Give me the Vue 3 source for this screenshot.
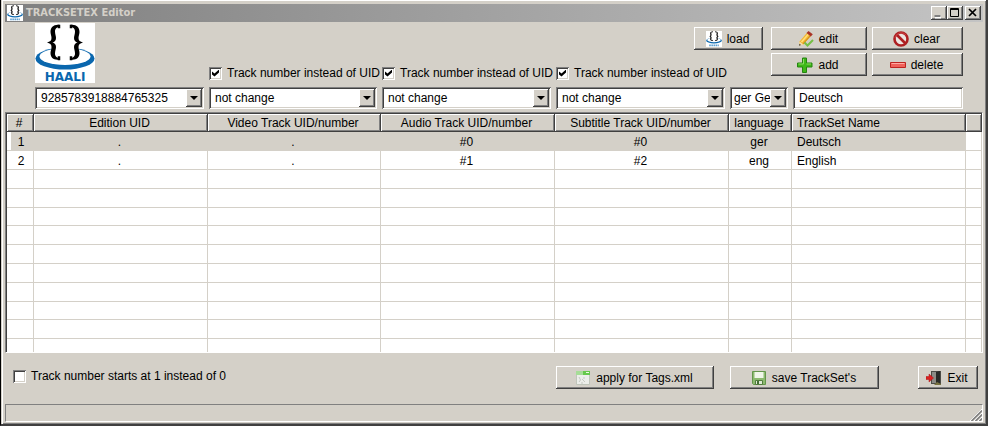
<script setup>
import { ref } from 'vue'

const editionUid = ref('9285783918884765325')
const tracks = ref([
  { id: 'video', label: 'Video track', useNumber: true, value: 'not change' },
  { id: 'audio', label: 'Audio track', useNumber: true, value: 'not change' },
  { id: 'subtitle', label: 'Subtitle track', useNumber: true, value: 'not change' }
])
const language = ref('ger German')
const setName = ref('Deutsch')
const startAtOne = ref(false)
const selected = ref(0)

const headers = [
  '#',
  'Edition UID',
  'Video Track UID/number',
  'Audio Track UID/number',
  'Subtitle Track UID/number',
  'language',
  'TrackSet Name',
  ''
]
const rows = [
  ['1', '.', '.', '#0', '#0', 'ger', 'Deutsch', ''],
  ['2', '.', '.', '#1', '#2', 'eng', 'English', ''],
  ...Array.from({ length: 10 }, () => Array(8).fill(''))
]
</script>

<template>
  <main class="window">
    <svg class="defs" aria-hidden="true">
      <symbol id="haali" viewBox="0 0 60 60">
        <rect width="60" height="60" fill="#fff" />
        <ellipse cx="30" cy="35.500" rx="29.500" ry="11" fill="#0a67ae" />
        <ellipse cx="30" cy="33.500" rx="25.500" ry="8.500" fill="#fff" />
        <path d="M16 14h28v23H16z" fill="#fff" />
        <path
          id="brace"
          d="M25 2C19 1 15.500 4 15.500 9C15.500 11 16.500 13 16.500 15C16.500 17.500 15 18.800 12 19.500C15 20.200 16.500 21.500 16.500 24C16.500 26 15.500 28 15.500 30C15.500 35 19 37.500 25 36.500V35C21.500 35 20 33 20 30.500C20 28 21 26 21 24C21 21.500 19.500 20 17.500 19.500C19.500 19 21 17.500 21 15C21 13 20 11 20 8.500C20 6 21.500 4 25 4Z"
        />
        <use href="#brace" transform="matrix(-1 0 0 1 60 0)" />
        <path d="M23.500 2.500h1v2h-1zM23.500 34h1v2.500h-1zM35.500 2.500h1v2h-1zM35.500 34h1v2.500h-1z" stroke="#000" stroke-width="1.500" />
      </symbol>
    </svg>

    <header class="titlebar">
      <span class="app-icon">
        <svg viewBox="0 0 60 60"><use href="#haali" /><path d="M12 54h36" stroke="#5d9fcf" stroke-width="6" stroke-dasharray="6 2" /></svg>
      </span>
      <h1>TRACKSETEX Editor</h1>
      <div class="caption-buttons">
        <button aria-label="Minimize"><svg viewBox="0 0 16 14"><path d="M4 11h6" stroke="#fff" stroke-width="3" /><path d="M3.500 10h6" stroke="#808080" stroke-width="2" /></svg></button>
        <button aria-label="Maximize"><svg viewBox="0 0 16 14"><path d="M3.500 2.500h8v8h-8zM3 3.500h9" fill="none" stroke="#000" /></svg></button>
        <button class="close" aria-label="Close"><svg viewBox="0 0 16 14"><path d="M4 3l7 7M11 3l-7 7" stroke="#000" stroke-width="1.700" /></svg></button>
      </div>
    </header>

    <section class="editor">
      <div class="logo">
        <svg viewBox="0 0 60 60"><use href="#haali" /></svg>
        <span>HAALI</span>
      </div>

      <div class="actions">
        <button class="push load">
          <svg class="icon" viewBox="0 0 60 60"><use href="#haali" /><path d="M12 54h36" stroke="#5d9fcf" stroke-width="6" stroke-dasharray="6 2" /></svg>
          load
        </button>
        <button class="push">
          <svg class="icon" viewBox="0 0 16 16">
            <path d="M1.500 10.500L9 1.800L13 5L5.500 13.500L1 14.500Z" fill="#f2b632" />
            <path d="M3.500 11L10.500 3" stroke="#ffe07a" stroke-width="1.500" />
            <path d="M5 12.800L12.400 4.800" stroke="#c98212" />
            <path d="M8.500 2L10.500 0L14.800 3.300L12.800 5.500Z" fill="#a93327" />
            <path d="M1.500 10.500L5.500 13.500L1 14.700Z" fill="#f3dcae" />
            <path d="M1 14.700l.5-2 1.500 1.400z" fill="#333" />
            <path d="M6.500 11.500L9.500 14.500L15 9" fill="none" stroke="#75bf45" stroke-width="2" />
          </svg>
          edit
        </button>
        <button class="push">
          <svg class="icon" viewBox="0 0 16 16">
            <circle cx="8" cy="8" r="6.500" fill="#ece5e1" stroke="#ad1f22" stroke-width="2.600" />
            <path d="M3.500 3.500l9 9" stroke="#ad1f22" stroke-width="2.600" />
            <path d="M2 7A6.300 6.300 0 0 1 13 4" fill="none" stroke="#d95555" stroke-width=".7" />
          </svg>
          clear
        </button>
        <button class="push add">
          <svg class="icon" viewBox="0 0 16 16">
            <path d="M5.500 1h4v5H15v4H9.500v5.500h-4V10H.5V6h5z" fill="#3eb817" stroke="#258411" />
            <path d="M6.500 2v5h-5M9.500 7H14" fill="none" stroke="#8bdc63" />
          </svg>
          add
        </button>
        <button class="push">
          <svg class="icon" viewBox="0 0 16 16">
            <path d="M.5 5.500h15v5H.5z" fill="#f0625b" stroke="#bd2420" />
            <path d="M1.500 6.500h13" stroke="#ffaba4" />
          </svg>
          delete
        </button>
      </div>

      <label v-for="t in tracks" :key="t.id" class="check" :class="t.id">
        <input v-model="t.useNumber" type="checkbox" />
        <span>Track number instead of UID</span>
      </label>

      <div class="fields">
        <div class="combo">
          <select v-model="editionUid" aria-label="Edition UID">
            <option>9285783918884765325</option>
          </select>
          <i></i>
        </div>
        <div v-for="t in tracks" :key="t.id" class="combo">
          <select v-model="t.value" :aria-label="t.label">
            <option>not change</option>
          </select>
          <i></i>
        </div>
        <div class="combo">
          <select v-model="language" class="short" aria-label="Language">
            <option value="ger German">ger Ge</option>
          </select>
          <i></i>
        </div>
        <input v-model="setName" class="name" type="text" aria-label="TrackSet name" />
      </div>
    </section>

    <div class="list">
      <table>
        <colgroup>
          <col class="c-index" />
          <col class="c-wide" />
          <col class="c-video" />
          <col class="c-wide" />
          <col class="c-wide" />
          <col class="c-lang" />
          <col class="c-wide" />
          <col />
        </colgroup>
        <thead>
          <tr><th v-for="(h, i) in headers" :key="i" scope="col">{{ h }}</th></tr>
        </thead>
        <tbody>
          <tr v-for="(r, i) in rows" :key="i" :class="{ selected: i === selected }" @click="i < 2 && (selected = i)">
            <td v-for="(c, j) in r" :key="j">{{ c }}</td>
          </tr>
        </tbody>
      </table>
    </div>

    <footer class="bottom">
      <label class="check">
        <input v-model="startAtOne" type="checkbox" />
        <span>Track number starts at 1 instead of 0</span>
      </label>
      <button class="push apply">
        <svg class="icon" viewBox="0 0 16 16">
          <path d="M1.500 1.500h13v13h-13z" fill="#eceeea" stroke="#bfc5ba" />
          <path d="M1 1h14v4H1z" fill="#66c94c" />
          <path d="M1 1h7v4H1z" fill="#a6dd97" />
          <path d="M11 2.500h3" stroke="#e9ffe2" />
          <path d="M4 7l1.500 3L4 12M7 9l3 3M8 8h2M6 13h2" fill="none" stroke="#c4c8c2" />
        </svg>
        apply for Tags.xml
      </button>
      <button class="push save">
        <svg class="icon" viewBox="0 0 16 16">
          <path d="M1.500 1.500h13v13h-12l-1-1z" fill="#8dba70" stroke="#64964b" />
          <path d="M3.500 2h9v6h-9z" fill="#f0f6e9" />
          <path d="M4.500 10.500h7v4h-7z" fill="#dfead7" stroke="#527d3e" />
          <path d="M6 11h2v3H6z" fill="#456d35" />
        </svg>
        save TrackSet's
      </button>
      <button class="push exit">
        <svg class="icon" viewBox="0 0 16 16">
          <path d="M5 1h10v13H5z" fill="#4b4b46" />
          <path d="M6 2h4v11H6z" fill="#8b8b86" />
          <path d="M10 2l4-1v14l-4-2z" fill="#282a28" />
          <path d="M8 15l3-3 4 2v1z" fill="#77713f" />
          <path d="M0 6.500h3V4l4.500 4L3 12V9.500H0z" fill="#d92020" stroke="#a91717" stroke-width=".5" />
        </svg>
        Exit
      </button>
    </footer>

    <div class="status" role="status">
      <svg viewBox="0 0 12 12" aria-hidden="true">
        <path d="M0 12L12 0M4 12l8-8M8 12l4-4" stroke="#fff" />
        <path d="M1.500 12L12 1.500M5.500 12L12 5.500M9.500 12L12 9.500" stroke="#808080" stroke-width="1.600" />
      </svg>
    </div>
  </main>
</template>

<style>
body {
  margin: 0;
  background: #d4d0c8;
}
</style>

<style scoped>
* {
  box-sizing: border-box;
}

.window {
  display: flex;
  flex-direction: column;
  min-height: 100vh;
  padding: 4px 3px 2px 4px;
  border: solid #404040;
  border-width: 0 2px 2px 1px;
  border-left-color: #000;
  background: #d4d0c8;
  box-shadow: inset 1px 0 #d4d0c8, inset 2px 1px #fff, inset -1px -1px #808080;
  color: #000;
  font: 12px/16px "Liberation Sans", Arial, sans-serif;
}

.defs {
  position: absolute;
  width: 0;
  height: 0;
}

button,
input,
select {
  margin: 0;
  border: 0;
  border-radius: 0;
  font: inherit;
  color: inherit;
}

.titlebar {
  display: flex;
  align-items: center;
  height: 18px;
  padding: 0 2px;
  background: linear-gradient(90deg, #808080, #c4c4c4);
}

.app-icon {
  display: flex;
  width: 16px;
  height: 16px;
}

h1 {
  flex: 1;
  margin: 0 0 0 3px;
  color: #d4d0c8;
  font: bold 11px/16px "DejaVu Sans Condensed", Tahoma, sans-serif;
}

.caption-buttons {
  display: flex;
}

.caption-buttons button {
  width: 16px;
  height: 14px;
  padding: 0;
  background: #d4d0c8;
  box-shadow: inset -1px -1px #404040, inset 1px 1px #fff, inset -2px -2px #808080;
}

.caption-buttons svg {
  display: block;
  width: 16px;
  height: 14px;
}

.caption-buttons .close {
  margin-left: 2px;
}

.editor {
  display: grid;
  grid-template-columns: 174px 173px 174px 174px 1fr;
  grid-template-rows: 60px 22px;
  row-gap: 4px;
  padding: 1px 20px 3px 30px;
}

.logo {
  display: grid;
  grid-area: 1 / 1;
  width: 60px;
  height: 60px;
}

.logo > * {
  grid-area: 1 / 1;
}

.logo span {
  align-self: end;
  justify-self: center;
  color: #0a67ae;
  font: bold 12px/12px "DejaVu Sans", Verdana, sans-serif;
}

.actions {
  display: grid;
  grid-area: 1 / 4 / 2 / 6;
  grid-template-columns: 69px 96px 91px;
  grid-auto-rows: 23px;
  justify-content: end;
  gap: 3px 5px;
  padding-top: 4px;
}

.load {
  margin-right: 3px;
  margin-left: -3px;
}

.add {
  grid-column: 2;
}

.push {
  display: flex;
  align-items: center;
  justify-content: center;
  gap: 5px;
  height: 23px;
  padding: 0 2px 0 0;
  background: #d4d0c8;
  box-shadow: inset -1px -1px #404040, inset 1px 1px #fff, inset -2px -2px #808080;
  white-space: nowrap;
}

.icon {
  flex: none;
  width: 16px;
  height: 16px;
}

.check {
  display: flex;
  align-items: center;
  gap: 5px;
  white-space: nowrap;
}

.editor .check {
  z-index: 1;
  align-self: end;
  justify-self: start;
  padding-bottom: 2px;
}

.video {
  grid-area: 1 / 2;
}

.audio {
  grid-area: 1 / 3;
}

.subtitle {
  grid-area: 1 / 4;
}

.check input {
  flex: none;
  appearance: none;
  width: 13px;
  height: 13px;
  padding: 3px;
  background: #fff;
  box-shadow: inset 1px 1px #808080, inset -1px -1px #fff, inset 2px 2px #404040, inset -2px -2px #d4d0c8;
}

.check input:checked::before {
  content: "";
  display: block;
  width: 7px;
  height: 7px;
  background: #000;
  clip-path: polygon(0 29%, 36% 57%, 100% 0, 100% 43%, 36% 100%, 0 71%);
}

.fields {
  display: grid;
  grid-area: 2 / 1 / 3 / 6;
  grid-template-columns: 169px 168px 169px 169px 58px 1fr;
  gap: 5px;
}

.combo {
  display: grid;
  grid-template-columns: 1fr 18px;
}

.combo select {
  grid-area: 1 / 1 / 2 / 3;
  appearance: none;
  width: 100%;
  height: 22px;
  padding: 0 18px 0 6px;
}

.combo .short {
  padding-left: 4px;
}

.combo select,
.name {
  background: #fff;
  box-shadow: inset 1px 1px #808080, inset -1px -1px #fff, inset 2px 2px #404040, inset -2px -2px #d4d0c8;
}

.combo i {
  display: grid;
  grid-area: 1 / 2;
  place-items: center;
  width: 16px;
  height: 18px;
  margin-top: 2px;
  background: #d4d0c8;
  box-shadow: inset -1px -1px #404040, inset 1px 1px #fff, inset -2px -2px #808080;
  pointer-events: none;
}

.combo i::before {
  content: "";
  border: solid transparent;
  border-width: 4px 4px 0;
  border-top-color: #000;
}

.name {
  min-width: 0;
  height: 22px;
  padding: 0 6px;
}

.list {
  height: 241px;
  overflow: hidden;
  border: 1px solid;
  border-color: #808080 #fff #fff #808080;
  background: #fff;
}

table {
  width: 100%;
  table-layout: fixed;
  border-collapse: separate;
  border-spacing: 0;
  border-top: 1px solid #404040;
  border-left: 1px solid #404040;
}

.c-index {
  width: 27px;
}

.c-wide {
  width: 174px;
}

.c-video {
  width: 173px;
}

.c-lang {
  width: 63px;
}

th {
  height: 18px;
  padding: 0 3px 0 0;
  background: #d4d0c8;
  box-shadow: inset -1px -1px #404040, inset 1px 1px #fff, inset -2px -2px #808080;
  font-weight: normal;
  line-height: 16px;
}

td {
  height: 19px;
  padding: 1px 2px 0 0;
  border: solid #d4d0c8;
  border-width: 0 1px 1px 0;
  line-height: 16px;
  text-align: center;
}

tr:nth-child(5n) td {
  height: 18px;
}

td:first-child {
  padding-left: 4px;
}

th:nth-child(7),
td:nth-child(7) {
  padding-left: 5px;
  text-align: left;
}

.selected td:not(:last-child) {
  background: #d4d0c8;
}

.selected td:first-child {
  background: linear-gradient(90deg, #fff 4px, #d4d0c8 4px);
}

.bottom {
  display: flex;
  align-items: center;
  padding: 13px 5px 0 8px;
}

.bottom .check {
  flex: 1;
}

.bottom .check input {
  margin-bottom: 3px;
}

.bottom .check span {
  margin-bottom: 4px;
}

.apply {
  width: 158px;
}

.save {
  width: 149px;
  margin: 0 39px 0 16px;
}

.exit {
  width: 60px;
}

.status {
  display: flex;
  align-items: end;
  justify-content: end;
  height: 18px;
  margin-top: auto;
  border: 1px solid;
  border-color: #808080 #fff #fff #808080;
}

.status svg {
  width: 12px;
  height: 12px;
}
</style>
